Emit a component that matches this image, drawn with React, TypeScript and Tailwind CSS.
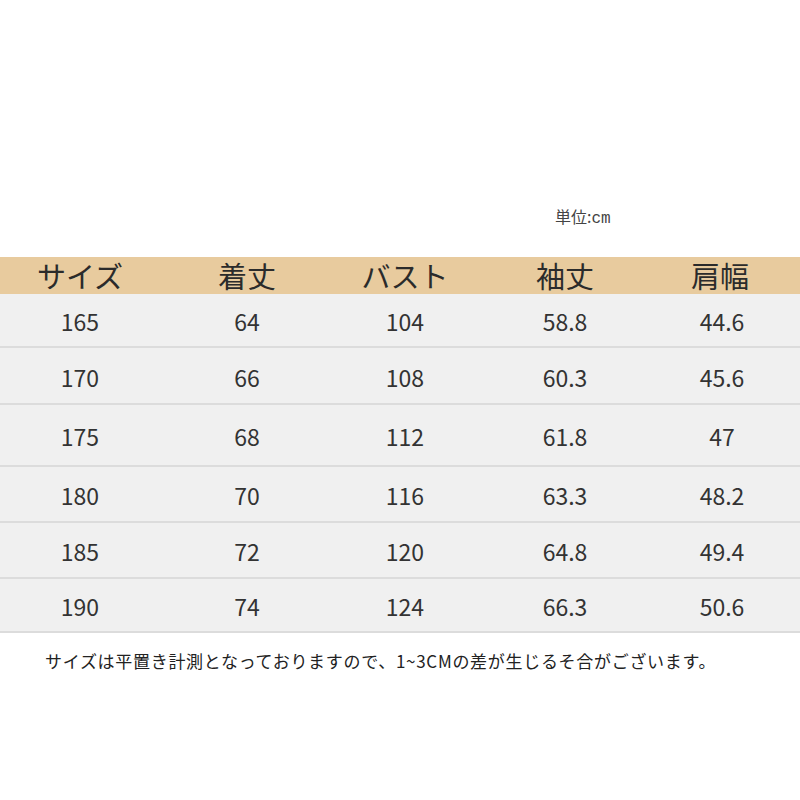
const headers = ["サイズ", "着丈", "バスト", "袖丈", "肩幅"];

const rows = [
  { h: "h-[54px]", cells: ["165", "64", "104", "58.8", "44.6"] },
  { h: "h-[57px]", cells: ["170", "66", "108", "60.3", "45.6"] },
  { h: "h-[62px]", cells: ["175", "68", "112", "61.8", "47"] },
  { h: "h-[56px]", cells: ["180", "70", "116", "63.3", "48.2"] },
  { h: "h-[56px]", cells: ["185", "72", "120", "64.8", "49.4"] },
  { h: "h-[54px]", cells: ["190", "74", "124", "66.3", "50.6"] },
];

const grid = "grid grid-cols-[160px_174px_142px_178px_132px]";
const font = { fontFamily: '"Noto Sans CJK JP", "Noto Sans", sans-serif' };

export default function App() {
  return (
    <div className="w-[800px] h-[800px] bg-white text-[#333333] pt-[205px]" style={font}>
      {/* 単位 */}
      <div className="pl-[555px] text-[16px] leading-[22px] text-[#444444]">
        単位:<span style={{ fontFamily: '"Liberation Mono", monospace' }}>cm</span>
      </div>

      <div className="mt-[27px]">
        {/* header */}
        <div className={`${grid} h-[37px] bg-[#e8cb9e] items-center`}>
          {headers.map((t) => (
            <div key={t} className="text-center text-[29px] leading-[37px] text-[#2b2b2b]">
              {t}
            </div>
          ))}
        </div>

        {rows.map((r) => (
          <div key={r.cells[0]} className={`${grid} ${r.h} bg-[#f0f0f0] border-b-2 border-[#dcdcdc] items-center`}>
            {r.cells.map((c, i) => (
              <div key={i} className={`text-center text-[23px] pt-[3px] ${i === 4 ? "pl-[4px]" : ""}`}>
                {c}
              </div>
            ))}
          </div>
        ))}
      </div>

      <p className="mt-[18px] pl-[45px] text-[17px] leading-[20px] tracking-[0.7px] text-[#222222]">
        サイズは平置き計測となっておりますので、1~3CMの差が生じるそ合がございます。
      </p>
    </div>
  );
}
